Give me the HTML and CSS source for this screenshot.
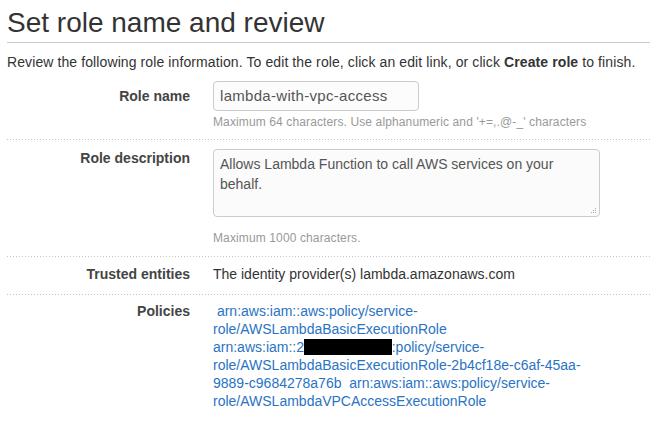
FILE: index.html
```html
<!DOCTYPE html>
<html>
<head>
<meta charset="utf-8">
<link rel="stylesheet" href="styles.css">
</head>
<body>
<div class="page">
  <h1 class="title">Set role name and review</h1>
  <p class="intro">Review the following role information. To edit the role, click an edit link, or click <b>Create role</b> to finish.</p>
  <div class="row row-name">
    <div class="label">Role name</div>
    <div class="value">
      <div class="input">lambda-with-vpc-access</div>
      <div class="hint">Maximum 64 characters. Use alphanumeric and '+=,.@-_' characters</div>
    </div>
  </div>
  <div class="row row-desc">
    <div class="label">Role description</div>
    <div class="value">
      <div class="textarea">Allows Lambda Function to call AWS services on your behalf.
        <svg class="grip" width="7" height="7" viewBox="0 0 7 7"><rect x="5" y="1" width="1" height="1" fill="#aaa"/><rect x="3" y="3" width="1" height="1" fill="#aaa"/><rect x="5" y="3" width="1" height="1" fill="#aaa"/><rect x="1" y="5" width="1" height="1" fill="#aaa"/><rect x="3" y="5" width="1" height="1" fill="#aaa"/><rect x="5" y="5" width="1" height="1" fill="#aaa"/></svg>
      </div>
      <div class="hint hint-area">Maximum 1000 characters.</div>
    </div>
  </div>
  <div class="row row-trust">
    <div class="label">Trusted entities</div>
    <div class="value text">The identity provider(s) lambda.amazonaws.com</div>
  </div>
  <div class="row row-pol">
    <div class="label">Policies</div>
    <div class="value links">&nbsp;<a href="#">arn:aws:iam::aws:policy/service-role/AWSLambdaBasicExecutionRole</a>&nbsp; <a href="#">arn:aws:iam::2<span class="redact">12345678901</span>:policy/service-role/AWSLambdaBasicExecutionRole-2b4cf18e-c6af-45aa-9889-c9684278a76b</a>&nbsp; <a href="#">arn:aws:iam::aws:policy/service-role/AWSLambdaVPCAccessExecutionRole</a></div>
  </div>
</div>
</body>
</html>
```

FILE: styles.css
```css
html, body {
  margin: 0;
  padding: 0;
  background: #fff;
}
body {
  font-family: "Liberation Sans", Arial, sans-serif;
  color: #333;
  font-size: 14px;
  line-height: 20px;
}
.page {
  padding: 0 0 0 7px;
}
.title {
  margin: 0;
  padding: 8px 0 4px 0;
  font-size: 28px;
  font-weight: normal;
  line-height: 30px;
  color: #333;
  border-bottom: 1px solid #ccc;
}
.intro {
  margin: 0;
  padding: 9px 0 0 0;
  line-height: 20px;
  letter-spacing: 0.1px;
  color: #333;
}
.row {
  display: grid;
  grid-template-columns: 183px 387px;
  column-gap: 23px;
  background-image: linear-gradient(to right, #c4c4c4 1px, transparent 1px);
  background-size: 3px 1px;
  background-repeat: repeat-x;
  background-position: left bottom;
}
.label {
  text-align: right;
  font-weight: bold;
  color: #444;
}
.value {
  min-width: 0;
}
.row-name {
  padding: 9px 0 10px 0;
}
.row-name .label {
  line-height: 30px;
}
.input {
  width: 198px;
  height: 28px;
  border: 1px solid #ccc;
  border-radius: 4px;
  background: #fcfcfc;
  padding: 0 0 0 6px;
  font-size: 15px;
  letter-spacing: 0.3px;
  line-height: 28px;
  color: #555;
}
.hint {
  margin-top: 3px;
  font-size: 12px;
  line-height: 16px;
  letter-spacing: 0.12px;
  color: #999;
}
.row-desc {
  padding: 9px 0 11px 0;
}
.row-desc .label {
  line-height: 18px;
}
.textarea {
  position: relative;
  height: 68px;
  border: 1px solid #ccc;
  border-radius: 4px;
  background: #fbfbfb;
  padding: 4px 40px 0 6px;
  box-sizing: border-box;
  font-size: 14px;
  line-height: 20px;
  color: #555;
}
.grip {
  position: absolute;
  right: 2px;
  bottom: 2px;
}
.hint-area {
  margin-top: 13px;
}
.row-trust {
  padding: 7px 0 11px 0;
}
.text {
  color: #333;
}
.row-pol {
  padding: 7px 0 0 0;
  background-image: none;
}
.links {
  line-height: 18px;
}
.row-pol .label {
  line-height: 18px;
}
.links a {
  color: #2a73c4;
  text-decoration: none;
}
.redact {
  background: #000;
  color: #000;
  padding-right: 2px;
}
```
